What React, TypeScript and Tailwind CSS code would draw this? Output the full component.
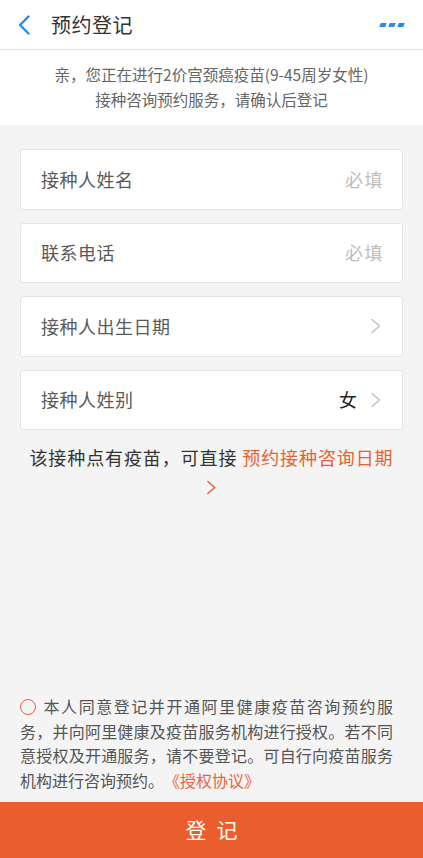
const FONT = { fontFamily: '"Noto Sans CJK SC", "Noto Sans", sans-serif' };

function Chevron({ className }: { className?: string }) {
  return (
    <svg viewBox="0 0 12 16" className={className} fill="none" stroke="currentColor" strokeWidth="1.6" strokeLinecap="round" strokeLinejoin="round">
      <path d="M2 1.5 L9.5 8 L2 14.5" />
    </svg>
  );
}

function FieldCard({ label, placeholder, value, arrow }: { label: string; placeholder?: string; value?: string; arrow?: boolean }) {
  return (
    <div className="h-[60.5px] flex items-center justify-between pl-5 pr-[20px] bg-white border border-[#e4e4e4] rounded-[3px]">
      <span className="text-[18px] text-[#5a5a5a] tracking-[0.5px]">{label}</span>
      <div className="flex items-center gap-[13px]">
        {placeholder && <span className="mr-[-2px] text-[18px] text-[#bdbdbd] tracking-[1.5px]">{placeholder}</span>}
        {value && <span className="text-[18px] text-[#222222]">{value}</span>}
        {arrow && <Chevron className="w-[12px] h-[16px] text-[#c2c2c2]" />}
      </div>
    </div>
  );
}

export default function App() {
  return (
    <div className="h-[858px] w-full flex flex-col bg-[#f4f4f4]" style={FONT}>
      {/* Header */}
      <div className="h-[50px] shrink-0 flex items-center bg-white border-b border-[#dddddd]">
        <svg viewBox="0 0 14 20" className="ml-[17px] w-[14px] h-[20px] text-[#2a8ae4]" fill="none" stroke="currentColor" strokeWidth="2.4" strokeLinecap="round" strokeLinejoin="round">
          <path d="M11.5 1.5 L3 10 L11.5 18.5" />
        </svg>
        <span className="ml-[20px] text-[20px] text-[#333333] tracking-[0.5px]">预约登记</span>
        <div className="ml-auto mr-[19px] flex items-center gap-[3px] -skew-x-[20deg]">
          <span className="w-[6px] h-[4px] bg-[#2a8ae4]" />
          <span className="w-[6px] h-[4px] bg-[#2a8ae4]" />
          <span className="w-[6px] h-[4px] bg-[#2a8ae4]" />
        </div>
      </div>

      {/* Notice */}
      <div className="h-[75px] shrink-0 bg-white flex flex-col items-center justify-center pb-[2px] text-[15.5px] leading-[25px] text-[#666666]">
        <p>亲，您正在进行2价宫颈癌疫苗(9-45周岁女性)</p>
        <p>接种咨询预约服务，请确认后登记</p>
      </div>

      {/* Form */}
      <div className="flex-1 flex flex-col px-5 pt-[24px]">
        <div className="flex flex-col gap-[13px]">
          <FieldCard label="接种人姓名" placeholder="必填" />
          <FieldCard label="联系电话" placeholder="必填" />
          <FieldCard label="接种人出生日期" arrow />
          <FieldCard label="接种人姓别" value="女" arrow />
        </div>

        <div className="mt-[12px] flex flex-col items-center text-[18px] leading-[30px] tracking-[0.9px]">
          <p className="text-[#333333]">
            该接种点有疫苗，可直接 <span className="text-[#e8622f]">预约接种咨询日期</span>
          </p>
          <Chevron className="mt-[7px] w-[11px] h-[17px] text-[#e8622f]" />
        </div>

        <div className="mt-auto pb-[10px] pr-[10px]">
          <p className="text-[16px] leading-[24.5px] text-[#555555] text-justify [text-spacing-trim:space-all]">
            <span className="inline-block align-[-2px] w-[16px] h-[16px] rounded-full border-[1.5px] border-[#e8643a] mr-[6px]" />
            本人同意登记并开通阿里健康疫苗咨询预约服务，并向阿里健康及疫苗服务机构进行授权。若不同意授权及开通服务，请不要登记。可自行向疫苗服务机构进行咨询预约。
            <span className="text-[#e8643a]">《授权协议》</span>
          </p>
        </div>
      </div>

      {/* Submit */}
      <button className="h-[56px] shrink-0 bg-[#ea5d2c] text-white text-[21px] tracking-[10px] pl-[10px]">
        登记
      </button>
    </div>
  );
}
